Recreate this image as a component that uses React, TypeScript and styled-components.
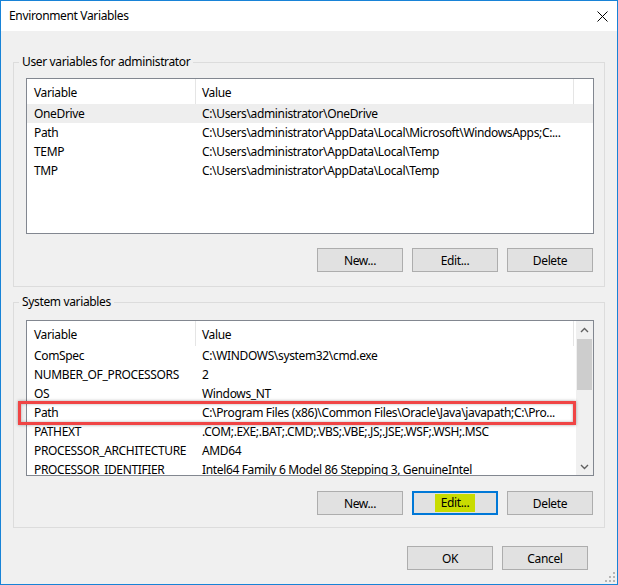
import React from "react";
import styled, { createGlobalStyle } from "styled-components";

const GlobalStyle = createGlobalStyle`
  html, body {
    margin: 0;
    padding: 0;
    background: #ffffff;
  }
`;

const FONT = `"Segoe UI", "Noto Sans", sans-serif`;

const Window = styled.div`
  position: relative;
  width: 618px;
  height: 585px;
  box-sizing: border-box;
  border: 1px solid #1883d7;
  background: #f0f0f0;
  display: flex;
  flex-direction: column;
  font-family: ${FONT};
  font-size: 12px;
  letter-spacing: -0.35px;
  color: #000;
`;

const TitleBar = styled.div`
  height: 30px;
  flex: none;
  background: #ffffff;
  display: flex;
  align-items: center;
  justify-content: space-between;
  padding: 0 9px 0 8px;
`;

const Title = styled.span`
  line-height: 16px;
`;

const Body = styled.div`
  flex: 1;
  display: flex;
  flex-direction: column;
  padding: 23px 12px 0 12px;
`;

//Classic group box: a fieldset whose legend sits on the top border
const GroupBox = styled.fieldset<{ $gapTop?: number }>`
  margin: ${(p) => p.$gapTop ?? 0}px 0 0 0;
  padding: 0;
  min-width: 0;
  border: 1px solid #dcdcdc;
`;

const GroupLegend = styled.legend`
  margin-left: 5px;
  padding: 0 3px;
  line-height: 16px;
  height: 16px;
`;

const GroupContent = styled.div<{ $padTop: number; $padBottom: number }>`
  display: flex;
  flex-direction: column;
  padding: ${(p) => p.$padTop}px 10px ${(p) => p.$padBottom}px 12px;
`;

const ListFrame = styled.div`
  position: relative;
`;

const ListView = styled.div`
  height: 156px;
  box-sizing: border-box;
  border: 1px solid #828790;
  background: #ffffff;
  display: flex;
  overflow: hidden;
`;

const ListBody = styled.div`
  flex: 1;
  min-width: 0;
`;

const GridRow = styled.div<{ $selected?: boolean; $header?: boolean }>`
  display: grid;
  grid-template-columns: 169px 378px;
  height: ${(p) => (p.$header ? 25 : 19)}px;
  line-height: ${(p) => (p.$header ? 27 : 20)}px;
  background: ${(p) => (p.$selected ? "#eeeeee" : "transparent")};
`;

const Cell = styled.div<{ $header?: boolean }>`
  padding-left: 7px;
  white-space: nowrap;
  overflow: hidden;
  border-right: 1px solid ${(p) => (p.$header ? "#e5e5e5" : "transparent")};

  & + & {
    padding-left: 6px;
  }
`;

const ScrollBar = styled.div`
  width: 17px;
  flex: none;
  background: #f0f0f0;
  display: flex;
  flex-direction: column;
`;

const ScrollArrow = styled.div`
  height: 17px;
  display: flex;
  align-items: center;
  justify-content: center;
`;

const ScrollThumb = styled.div`
  height: 51px;
  margin: 1px 1px 0 1px;
  background: #cdcdcd;
`;

const ScrollTrack = styled.div`
  flex: 1;
`;

//Red annotation box drawn over the selected row
const Callout = styled.div<{ $top: number }>`
  position: absolute;
  left: -8px;
  top: ${(p) => p.$top}px;
  width: 558px;
  height: 24px;
  box-sizing: border-box;
  border: 3px solid #f04545;
  box-shadow: 0 0 3px rgba(0, 0, 0, 0.35), inset 0 0 3px rgba(0, 0, 0, 0.3);
  pointer-events: none;
`;

const ButtonRow = styled.div<{ $gapTop: number }>`
  display: flex;
  justify-content: flex-end;
  gap: 9px;
  margin-top: ${(p) => p.$gapTop}px;
  padding-right: 1px;
`;

const Button = styled.button<{ $focused?: boolean }>`
  width: 86px;
  height: 24px;
  box-sizing: border-box;
  margin: 0;
  padding: 0;
  background: #e1e1e1;
  border: ${(p) => (p.$focused ? "2px solid #0078d7" : "1px solid #adadad")};
  font-family: ${FONT};
  font-size: 12px;
  letter-spacing: -0.35px;
  color: #000;
  display: flex;
  align-items: center;
  justify-content: center;
`;

const Highlight = styled.span`
  background: #c9dc00;
  padding: 0 6px;
  line-height: 18px;
`;

const Footer = styled.div`
  display: flex;
  justify-content: flex-end;
  gap: 9px;
  margin-top: 18px;
  padding-right: 17px;
`;

const Grip = styled.svg`
  position: absolute;
  right: 1px;
  bottom: 1px;
`;

type Variable = [string, string];

const userVars: Variable[] = [
  ["OneDrive", "C:\\Users\\administrator\\OneDrive"],
  [
    "Path",
    "C:\\Users\\administrator\\AppData\\Local\\Microsoft\\WindowsApps;C:...",
  ],
  ["TEMP", "C:\\Users\\administrator\\AppData\\Local\\Temp"],
  ["TMP", "C:\\Users\\administrator\\AppData\\Local\\Temp"],
];

const systemVars: Variable[] = [
  ["ComSpec", "C:\\WINDOWS\\system32\\cmd.exe"],
  ["NUMBER_OF_PROCESSORS", "2"],
  ["OS", "Windows_NT"],
  [
    "Path",
    "C:\\Program Files (x86)\\Common Files\\Oracle\\Java\\javapath;C:\\Pro...",
  ],
  ["PATHEXT", ".COM;.EXE;.BAT;.CMD;.VBS;.VBE;.JS;.JSE;.WSF;.WSH;.MSC"],
  ["PROCESSOR_ARCHITECTURE", "AMD64"],
  [
    "PROCESSOR_IDENTIFIER",
    "Intel64 Family 6 Model 86 Stepping 3, GenuineIntel",
  ],
];

function Chevron({ up }: { up?: boolean }) {
  return (
    <svg width="9" height="6" viewBox="0 0 9 6">
      <path
        d={up ? "M1 5 L4.5 1.5 L8 5" : "M1 1 L4.5 4.5 L8 1"}
        fill="none"
        stroke="#606060"
        strokeWidth="1.4"
      />
    </svg>
  );
}

function VariableList({
  rows,
  selected,
  scroll,
}: {
  rows: Variable[];
  selected?: number;
  scroll?: boolean;
}) {
  return (
    <ListView>
      <ListBody>
        <GridRow $header>
          <Cell $header>Variable</Cell>
          <Cell $header>Value</Cell>
        </GridRow>
        {rows.map(([name, value], i) => (
          <GridRow key={name + i} $selected={i === selected}>
            <Cell>{name}</Cell>
            <Cell>{value}</Cell>
          </GridRow>
        ))}
      </ListBody>
      {scroll && (
        <ScrollBar>
          <ScrollArrow>
            <Chevron up />
          </ScrollArrow>
          <ScrollThumb />
          <ScrollTrack />
          <ScrollArrow>
            <Chevron />
          </ScrollArrow>
        </ScrollBar>
      )}
    </ListView>
  );
}

export default function App() {
  return (
    <>
      <GlobalStyle />
      <Window>
        <TitleBar>
          <Title>Environment Variables</Title>
          <svg width="11" height="11" viewBox="0 0 11 11">
            <path d="M0.5 0.5 L10.5 10.5 M10.5 0.5 L0.5 10.5" stroke="#000" strokeWidth="1" />
          </svg>
        </TitleBar>
        <Body>
          <GroupBox>
            <GroupLegend>User variables for administrator</GroupLegend>
            <GroupContent $padTop={8} $padBottom={14}>
              <ListFrame>
                <VariableList rows={userVars} selected={0} />
              </ListFrame>
              <ButtonRow $gapTop={14}>
                <Button>New...</Button>
                <Button>Edit...</Button>
                <Button>Delete</Button>
              </ButtonRow>
            </GroupContent>
          </GroupBox>

          <GroupBox $gapTop={7}>
            <GroupLegend>System variables</GroupLegend>
            <GroupContent $padTop={10} $padBottom={12}>
              <ListFrame>
                <VariableList rows={systemVars} scroll />
                <Callout $top={81} />
              </ListFrame>
              <ButtonRow $gapTop={15}>
                <Button>New...</Button>
                <Button $focused>
                  <Highlight>Edit...</Highlight>
                </Button>
                <Button>Delete</Button>
              </ButtonRow>
            </GroupContent>
          </GroupBox>

          <Footer>
            <Button>OK</Button>
            <Button>Cancel</Button>
          </Footer>
        </Body>
        <Grip width="12" height="12" viewBox="0 0 12 12">
          <rect x="9" y="1" width="2" height="2" fill="#b5b5b5" />
          <rect x="5" y="5" width="2" height="2" fill="#b5b5b5" />
          <rect x="9" y="5" width="2" height="2" fill="#b5b5b5" />
          <rect x="1" y="9" width="2" height="2" fill="#b5b5b5" />
          <rect x="5" y="9" width="2" height="2" fill="#b5b5b5" />
          <rect x="9" y="9" width="2" height="2" fill="#b5b5b5" />
        </Grip>
      </Window>
    </>
  );
}
